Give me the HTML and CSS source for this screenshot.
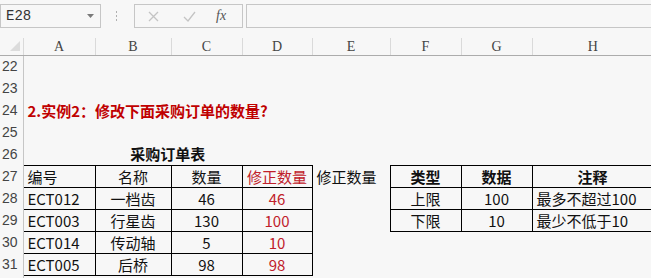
FILE: index.html
```html
<!DOCTYPE html>
<html>
<head>
  <title>Sheet</title>
  <link rel="stylesheet" href="styles.css">
</head>
<body>
  <div class="bar">
    <div class="namebox">
      <span>E28</span>
      <svg class="caret" width="7" height="4" viewBox="0 0 7 4"><path d="M0 0h7L3.5 4z" fill="#7a7a7a"/></svg>
    </div>
    <svg class="grip" width="3" height="12" viewBox="0 0 3 12">
      <rect x="1" y="1" width="1" height="2" fill="#b0b0b0"/>
      <rect x="1" y="5" width="1" height="2" fill="#b0b0b0"/>
      <rect x="1" y="9" width="1" height="2" fill="#b0b0b0"/>
    </svg>
    <div class="fnbox">
      <svg width="11" height="11" viewBox="0 0 11 11"><path d="M1 1l9 9M10 1l-9 9" stroke="#c4c4c4" stroke-width="1.3" fill="none"/></svg>
      <svg width="13" height="11" viewBox="0 0 13 11"><path d="M1 6l4 4l7-9" stroke="#c4c4c4" stroke-width="1.3" fill="none"/></svg>
      <span class="fx">fx</span>
    </div>
    <div class="formula"></div>
  </div>

  <table class="sheet">
    <colgroup>
      <col style="width:23px">
      <col style="width:72px">
      <col style="width:76px">
      <col style="width:71px">
      <col style="width:70px">
      <col style="width:78px">
      <col style="width:71px">
      <col style="width:71px">
      <col style="width:121px">
    </colgroup>
    <tr class="colhead">
      <th class="corner"><svg width="10" height="10" viewBox="0 0 10 10"><path d="M10 0v10H0z" fill="#dcdcdc"/></svg></th>
      <th>A</th><th>B</th><th>C</th><th>D</th><th>E</th><th>F</th><th>G</th><th>H</th>
    </tr>
    <tr><th class="rh">22</th><td colspan="8"></td></tr>
    <tr><th class="rh">23</th><td colspan="8"></td></tr>
    <tr><th class="rh">24</th><td colspan="5" class="title">2.实例2：修改下面采购订单的数量?</td><td></td><td></td><td></td></tr>
    <tr><th class="rh">25</th><td colspan="8"></td></tr>
    <tr><th class="rh">26</th><td colspan="4" class="caption">采购订单表</td><td></td><td></td><td></td><td></td></tr>
    <tr>
      <th class="rh">27</th>
      <td class="b">编号</td><td class="b c">名称</td><td class="b c">数量</td><td class="b c red">修正数量</td>
      <td>修正数量</td>
      <td class="b c bold">类型</td><td class="b c bold">数据</td><td class="b c bold">注释</td>
    </tr>
    <tr>
      <th class="rh">28</th>
      <td class="b">ECT012</td><td class="b c">一档齿</td><td class="b c">46</td><td class="b c red">46</td>
      <td></td>
      <td class="b c">上限</td><td class="b c">100</td><td class="b">最多不超过100</td>
    </tr>
    <tr>
      <th class="rh">29</th>
      <td class="b">ECT003</td><td class="b c">行星齿</td><td class="b c">130</td><td class="b c red">100</td>
      <td></td>
      <td class="b c">下限</td><td class="b c">10</td><td class="b">最少不低于10</td>
    </tr>
    <tr>
      <th class="rh">30</th>
      <td class="b">ECT014</td><td class="b c">传动轴</td><td class="b c">5</td><td class="b c red">10</td>
      <td></td><td></td><td></td><td></td>
    </tr>
    <tr>
      <th class="rh">31</th>
      <td class="b">ECT005</td><td class="b c">后桥</td><td class="b c">98</td><td class="b c red">98</td>
      <td></td><td></td><td></td><td></td>
    </tr>
    <tr><th class="rh"></th><td colspan="8"></td></tr>
  </table>
</body>
</html>
```

FILE: styles.css
```css
html, body {
  margin: 0;
  background-color: #f7f7f7;
  overflow: hidden;
}
body {
  width: 651px;
  height: 278px;
  font-family: "Noto Sans CJK SC", sans-serif;
}
.bar {
  display: flex;
  align-items: center;
  height: 24px;
  padding-top: 4px;
  padding-bottom: 10px;
}
.namebox {
  border: 1px solid #c6c6c6;
  display: flex;
  align-items: center;
  justify-content: space-between;
  padding: 0 6px 0 5px;
  box-sizing: border-box;
  width: 101px;
  height: 24px;
  font-family: "Liberation Mono", monospace;
  font-size: 14px;
  color: #333;
}
.caret {
  margin-top: -1px;
}
.grip {
  margin: 0 16px 0 14px;
}
.fnbox {
  width: 109px;
  height: 24px;
  box-sizing: border-box;
  border: 1px solid #c6c6c6;
  display: flex;
  align-items: center;
  padding-left: 13px;
  gap: 24px;
}
.fx {
  font-family: "Liberation Serif", serif;
  font-style: italic;
  font-size: 14px;
  color: #555;
  margin-left: -4px;
}
.formula {
  flex: 1;
  height: 24px;
  box-sizing: border-box;
  border: 1px solid #c6c6c6;
  border-right: none;
  margin-left: 3px;
}
.sheet {
  border-collapse: collapse;
  table-layout: fixed;
  width: 651px;
}
.sheet tr {
  height: 22px;
}
.sheet td {
  padding: 0 0 0 4px;
  font-size: 15px;
  color: #111;
  white-space: nowrap;
  overflow: visible;
  vertical-align: middle;
}
.colhead {
  height: 17px !important;
}
.colhead th {
  font-family: "Liberation Serif", serif;
  font-weight: normal;
  font-size: 14px;
  color: #444;
  border-left: 1px solid #dadada;
  border-bottom: 1px solid #acacac;
  padding: 2px 0 0 0;
  line-height: 14px;
}
.colhead .corner {
  border-left: none;
  border-right: 1px solid #dadada;
  text-align: right;
  padding: 2px 3px 0 0;
}
.rh {
  font-family: "Liberation Sans", sans-serif;
  font-weight: normal;
  font-size: 14px;
  color: #444;
  text-align: left;
  padding: 0 0 0 2px;
  border-right: 1px solid #c6c6c6;
}
.b {
  border: 1px solid #000;
}
.c {
  text-align: center;
  padding-left: 0 !important;
}
.bold {
  font-weight: bold;
}
.red {
  color: #c0202a !important;
}
.title {
  color: #c00000 !important;
  font-weight: bold;
}
.caption {
  text-align: center;
  font-weight: bold;
  padding-left: 0 !important;
}
```
